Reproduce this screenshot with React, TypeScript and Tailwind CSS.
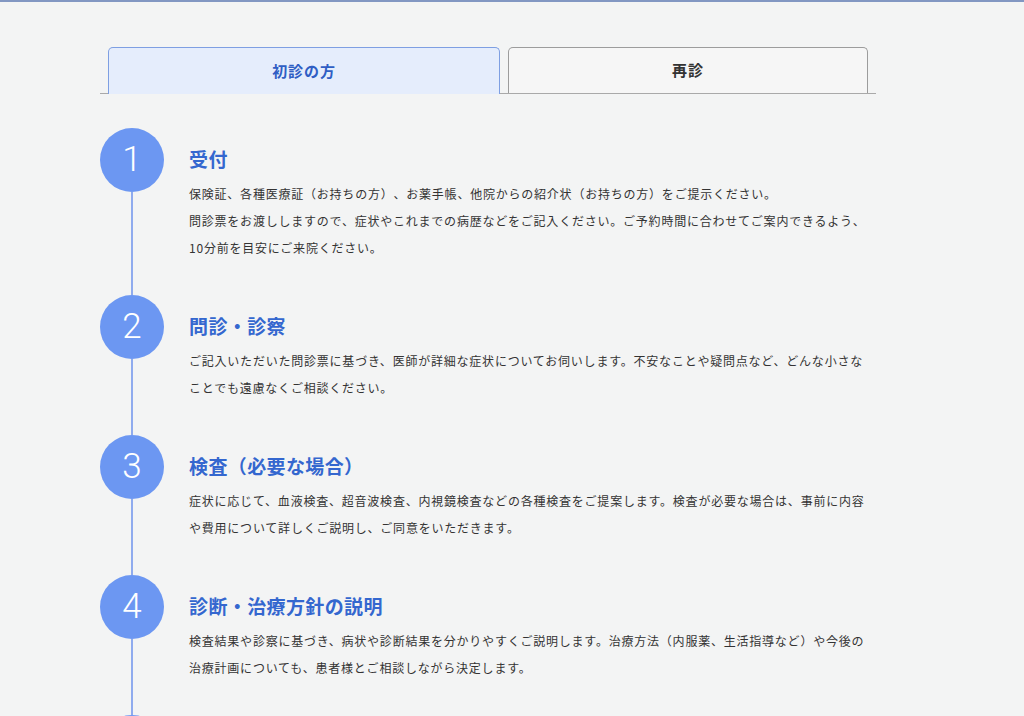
import React from "react";

const steps = [
  {
    n: "1",
    title: "受付",
    lines: [
      "保険証、各種医療証（お持ちの方）、お薬手帳、他院からの紹介状（お持ちの方）をご提示ください。",
      "問診票をお渡ししますので、症状やこれまでの病歴などをご記入ください。ご予約時間に合わせてご案内できるよう、",
      "10分前を目安にご来院ください。",
    ],
  },
  {
    n: "2",
    title: "問診・診察",
    lines: [
      "ご記入いただいた問診票に基づき、医師が詳細な症状についてお伺いします。不安なことや疑問点など、どんな小さな",
      "ことでも遠慮なくご相談ください。",
    ],
  },
  {
    n: "3",
    title: "検査（必要な場合）",
    lines: [
      "症状に応じて、血液検査、超音波検査、内視鏡検査などの各種検査をご提案します。検査が必要な場合は、事前に内容",
      "や費用について詳しくご説明し、ご同意をいただきます。",
    ],
  },
  {
    n: "4",
    title: "診断・治療方針の説明",
    lines: [
      "検査結果や診察に基づき、病状や診断結果を分かりやすくご説明します。治療方法（内服薬、生活指導など）や今後の",
      "治療計画についても、患者様とご相談しながら決定します。",
    ],
  },
  {
    n: "5",
    title: "お会計・お薬のお渡し",
    lines: [
      "診察後、受付にてお会計を行います。処方箋が出た場合は、お近くの調剤薬局でお薬をお受け取りください。",
    ],
  },
];

const jp = { fontFamily: '"Noto Sans CJK JP", "Noto Sans", sans-serif' };

export default function App() {
  return (
    <div className="min-h-screen w-full bg-[#f3f4f4] [text-spacing-trim:space-all]" style={jp}>
      <div className="h-[2px] w-full bg-[#8297c2]" />
      <div className="ml-[100px] w-[776px] pt-[45px]">
        <div className="flex items-end gap-2 border-b border-[#a9a9a9] px-2">
          <button className="-mb-px flex h-[47px] w-[392px] items-center justify-center rounded-t-[5px] border border-b-0 border-[#7e9fe2] bg-[#e5edfc] text-[15px] font-bold tracking-[0.06em] text-[#2f5ec4]">
            初診の方
          </button>
          <button className="flex h-[46px] w-[360px] items-center justify-center rounded-t-[5px] border border-b-0 border-[#9c9c9c] bg-[#f6f6f6] text-[15px] font-bold tracking-[0.06em] text-[#333333]">
            再診
          </button>
        </div>

        <div className="pt-[34px]">
          {steps.map((s) => (
            <div key={s.n} className="flex">
              <div className="flex w-[64px] shrink-0 flex-col items-center">
                <div
                  className="flex h-[64px] w-[64px] shrink-0 items-center justify-center rounded-full bg-[#6c97f2] pb-[2px] text-[35px] font-light leading-none text-white"
                  style={{ fontFamily: 'Roboto, "Noto Sans", sans-serif' }}
                >
                  {s.n}
                </div>
                <div className="w-[1.5px] flex-1 bg-[#8fabee]" />
              </div>
              <div className="ml-[25px] flex-1 pb-[34px] pt-[18px]">
                <h2 className="text-[19px] font-bold leading-[26px] tracking-[0.02em] text-[#3467cf]">
                  {s.title}
                </h2>
                <p className="mt-[8px] text-[12px] leading-[27px] tracking-[0.065em] text-[#333333]">
                  {s.lines.map((l, i) => (
                    <React.Fragment key={i}>
                      {l}
                      {i < s.lines.length - 1 && <br />}
                    </React.Fragment>
                  ))}
                </p>
              </div>
            </div>
          ))}
        </div>
      </div>
    </div>
  );
}
